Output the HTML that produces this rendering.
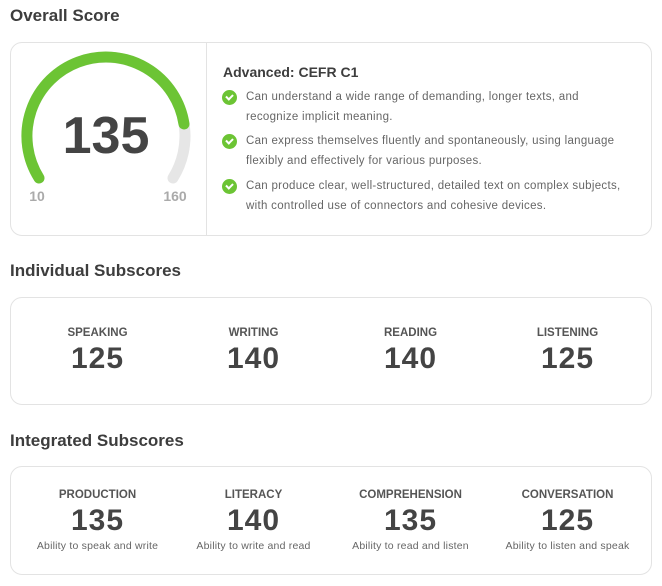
<!DOCTYPE html>
<html><head><style>
*{margin:0;padding:0;box-sizing:border-box}
body{width:662px;height:586px;background:#fff;font-family:"Liberation Sans",sans-serif;color:#444;position:relative;overflow:hidden}
.h{position:absolute;left:10px;font-size:17px;font-weight:bold;color:#3d3d3d}
.card{position:absolute;left:10px;width:642px;border:1px solid #e3e3e3;border-radius:12px}
.col{position:absolute;width:157px;text-align:center}
.lab{font-size:11.5px;font-weight:bold;color:#555;height:14px;line-height:14px}
.num{font-size:30px;font-weight:bold;color:#444;letter-spacing:1px;line-height:34px;margin-top:2px}
.desc{font-size:10.5px;color:#666;margin-top:2px;letter-spacing:0.2px}
.item{position:absolute;left:223px;font-size:11.5px;color:#666;line-height:19.5px;letter-spacing:0.3px}
.chk{position:absolute;left:-1px;width:15px;height:15px;border-radius:50%;background:#6cc434}
.chk:after{content:"";position:absolute;left:4px;top:3.5px;width:5px;height:3px;border-left:2px solid #fff;border-bottom:2px solid #fff;transform:rotate(-45deg)}
.item span{display:block;padding-left:23px}
</style></head><body>
<div class="h" style="top:6px">Overall Score</div>
<div class="card" style="top:42px;height:194px"></div>
<div style="position:absolute;left:206px;top:43px;width:1px;height:192px;background:#e3e3e3"></div>
<svg style="position:absolute;left:0;top:0" width="210" height="240">
<path d="M39 178 A79 79 0 1 1 173 178" fill="none" stroke="#e6e6e6" stroke-width="11" stroke-linecap="round"/>
<path d="M39 178 A79 79 0 1 1 184 124" fill="none" stroke="#6cc434" stroke-width="11" stroke-linecap="round"/>
<text x="106" y="153" text-anchor="middle" font-family="Liberation Sans" font-weight="bold" font-size="52" fill="#444">135</text>
<text x="37" y="201" text-anchor="middle" font-family="Liberation Sans" font-weight="bold" font-size="14" fill="#aaa">10</text>
<text x="175" y="201" text-anchor="middle" font-family="Liberation Sans" font-weight="bold" font-size="14" fill="#aaa">160</text>
</svg>
<div style="position:absolute;left:223px;top:64px;font-size:14px;font-weight:bold;color:#3d3d3d">Advanced: CEFR C1</div>
<div class="item" style="top:88px"><div class="chk" style="top:2px"></div><span>Can understand a wide range of demanding, longer texts, and<br>recognize implicit meaning.</span></div>
<div class="item" style="top:132px"><div class="chk" style="top:2px"></div><span>Can express themselves fluently and spontaneously, using language<br>flexibly and effectively for various purposes.</span></div>
<div class="item" style="top:177px"><div class="chk" style="top:2px"></div><span>Can produce clear, well-structured, detailed text on complex subjects,<br>with controlled use of connectors and cohesive devices.</span></div>

<div class="h" style="top:261px">Individual Subscores</div>
<div class="card" style="top:297px;height:108px"></div>
<div class="col" style="left:19px;top:326px"><div class="lab">SPEAKING</div><div class="num">125</div></div>
<div class="col" style="left:175px;top:326px"><div class="lab">WRITING</div><div class="num">140</div></div>
<div class="col" style="left:332px;top:326px"><div class="lab">READING</div><div class="num">140</div></div>
<div class="col" style="left:489px;top:326px"><div class="lab">LISTENING</div><div class="num">125</div></div>

<div class="h" style="top:431px">Integrated Subscores</div>
<div class="card" style="top:466px;height:109px"></div>
<div class="col" style="left:19px;top:488px"><div class="lab">PRODUCTION</div><div class="num">135</div><div class="desc">Ability to speak and write</div></div>
<div class="col" style="left:175px;top:488px"><div class="lab">LITERACY</div><div class="num">140</div><div class="desc">Ability to write and read</div></div>
<div class="col" style="left:332px;top:488px"><div class="lab">COMPREHENSION</div><div class="num">135</div><div class="desc">Ability to read and listen</div></div>
<div class="col" style="left:489px;top:488px"><div class="lab">CONVERSATION</div><div class="num">125</div><div class="desc">Ability to listen and speak</div></div>
</body></html>
